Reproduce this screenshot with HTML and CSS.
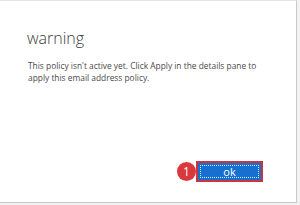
FILE: index.html
```html
<!DOCTYPE html>
<html>
<head>
<meta charset="utf-8">
<link rel="stylesheet" href="styles.css">
</head>
<body>
<div class="dialog">
  <h1 class="title">warning</h1>
  <p class="message">This policy isn't active yet. Click Apply in the details pane to apply this email address policy.</p>
  <div class="actions">
    <div class="btn-wrap">
      <span class="badge">1</span>
      <button class="btn-ok"><span class="btn-inner">ok</span></button>
    </div>
  </div>
</div>
</body>
</html>
```
FILE: styles.css
```css
html, body {
  margin: 0;
  padding: 0;
  background: #f2f2f2;
}
.dialog {
  box-sizing: border-box;
  width: 297px;
  height: 203px;
  background: #ffffff;
  border-top: 1px solid #e4e4e4;
  border-right: 1px solid #c9c9c9;
  border-bottom: 1px solid #c9c9c9;
  padding: 26px 33px 0 27px;
  display: flex;
  flex-direction: column;
  font-family: "Open Sans", "Noto Sans", sans-serif;
}
.title {
  margin: 0;
  font-size: 16px;
  font-weight: 300;
  color: #3a3a3a;
  line-height: 22px;
}
.message {
  margin: 11px 0 0 1px;
  font-size: 8.4px;
  line-height: 12px;
  color: #4a4a4a;
  max-width: 240px;
}
.actions {
  margin-top: auto;
  margin-bottom: 20px;
  display: flex;
  justify-content: flex-end;
}
.btn-wrap {
  position: relative;
}
.btn-ok {
  display: block;
  box-sizing: border-box;
  width: 67px;
  height: 21px;
  padding: 2px;
  border: 2px solid #c9353d;
  background: #1570d2;
  cursor: pointer;
}
.btn-inner {
  display: flex;
  align-items: center;
  justify-content: center;
  box-sizing: border-box;
  width: 100%;
  height: 100%;
  border: 1px dotted #d8e8f8;
  color: #ffffff;
  font-family: "Open Sans", "Noto Sans", sans-serif;
  font-size: 11px;
}
.badge {
  position: absolute;
  left: -19px;
  top: 1px;
  width: 19px;
  height: 19px;
  border-radius: 50%;
  background: #d9383c;
  color: #ffffff;
  font-family: "Open Sans", sans-serif;
  font-size: 12px;
  line-height: 19px;
  text-align: center;
}
```
